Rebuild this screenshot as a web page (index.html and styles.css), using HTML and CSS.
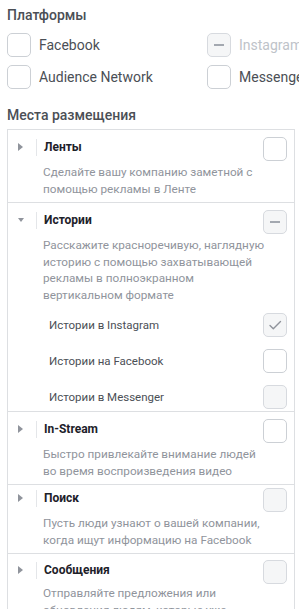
FILE: index.html
```html
<!DOCTYPE html>
<html lang="ru">
<head>
<meta charset="utf-8">
<link rel="stylesheet" href="styles.css">
</head>
<body>
<div class="page">
  <h2 class="heading">Платформы</h2>
  <div class="platforms">
    <label class="platform"><span class="cb"></span><span>Facebook</span></label>
    <label class="platform platform-disabled"><span class="cb cb-disabled cb-dash"></span><span>Instagram</span></label>
    <label class="platform"><span class="cb"></span><span>Audience Network</span></label>
    <label class="platform"><span class="cb"></span><span>Messenger</span></label>
  </div>

  <h2 class="heading heading-placements">Места размещения</h2>
  <div class="placements">
    <section class="placement">
      <div class="ph">
        <span class="arrow arrow-right"></span><span class="sep"></span>
        <span class="ptitle">Ленты</span>
        <span class="cb"></span>
      </div>
      <p class="desc">Сделайте вашу компанию заметной с помощью рекламы в Ленте</p>
    </section>

    <section class="placement">
      <div class="ph">
        <span class="arrow arrow-down"></span><span class="sep"></span>
        <span class="ptitle">Истории</span>
        <span class="cb cb-disabled cb-dash"></span>
      </div>
      <p class="desc">Расскажите красноречивую, наглядную историю с помощью захватывающей рекламы в полноэкранном вертикальном формате</p>
      <div class="subs">
        <div class="sub"><span class="subtitle">Истории в Instagram</span><span class="cb cb-disabled cb-check"><svg viewBox="0 0 24 24" width="24" height="24"><path d="M7 12.5l3.3 3.3L17.5 8.6" fill="none" stroke="#90949c" stroke-width="1.4" stroke-linecap="round" stroke-linejoin="round"/></svg></span></div>
        <div class="sub"><span class="subtitle">Истории на Facebook</span><span class="cb"></span></div>
        <div class="sub"><span class="subtitle">Истории в Messenger</span><span class="cb cb-disabled"></span></div>
      </div>
    </section>

    <section class="placement">
      <div class="ph">
        <span class="arrow arrow-right"></span><span class="sep"></span>
        <span class="ptitle">In-Stream</span>
        <span class="cb"></span>
      </div>
      <p class="desc">Быстро привлекайте внимание людей во время воспроизведения видео</p>
    </section>

    <section class="placement placement-tight">
      <div class="ph">
        <span class="arrow arrow-right"></span><span class="sep"></span>
        <span class="ptitle">Поиск</span>
        <span class="cb cb-disabled"></span>
      </div>
      <p class="desc">Пусть люди узнают о вашей компании, когда ищут информацию на Facebook</p>
    </section>

    <section class="placement placement-last">
      <div class="ph">
        <span class="arrow arrow-right"></span><span class="sep"></span>
        <span class="ptitle">Сообщения</span>
        <span class="cb cb-disabled"></span>
      </div>
      <p class="desc desc-close">Отправляйте предложения или обновления людям, которые уже общались с вашей компанией</p>
    </section>
  </div>
</div>
</body>
</html>
```

FILE: styles.css
```css
html, body {
  margin: 0;
  padding: 0;
  background: #ffffff;
  overflow: hidden;
}

body {
  font-family: Roboto, "Noto Sans", Arial, sans-serif;
  color: #4b4f56;
}

.page {
  padding: 6px 0 0 7px;
  width: 400px;
}

.heading {
  margin: 0;
  font-size: 14px;
  line-height: 18px;
  font-weight: 500;
  color: #4b4f56;
}

.heading-placements {
  margin-top: 17px;
}

.platforms {
  margin-top: 9px;
  display: grid;
  grid-template-columns: 200px 200px;
  row-gap: 8px;
}

.platform {
  display: flex;
  align-items: center;
  gap: 8px;
  font-size: 14px;
  line-height: 16px;
  color: #4b4f56;
  white-space: nowrap;
}

.platform-disabled {
  color: #bec3c9;
}

.cb {
  position: relative;
  flex: 0 0 auto;
  box-sizing: border-box;
  width: 24px;
  height: 24px;
  border: 1px solid #ccd0d5;
  border-radius: 5px;
  background: #ffffff;
  display: block;
}

.cb-disabled {
  background: #f5f6f7;
  border-color: #d7dadf;
}

.cb-dash::after {
  content: "";
  position: absolute;
  left: 6px;
  top: 10px;
  width: 10px;
  height: 2px;
  background: #a3a8b0;
}

.cb-check svg {
  position: absolute;
  left: -1px;
  top: -1px;
}

.placements {
  margin-top: 5px;
  width: 288px;
  box-sizing: border-box;
  border: 1px solid #dddfe2;
  border-bottom: none;
}

.placement {
  padding: 7px 7px 0 10px;
  border-bottom: 1px solid #dddfe2;
}

.placement-tight {
  padding-top: 3px;
}

.placement-last {
  padding-top: 6px;
}

.ph {
  display: flex;
  align-items: center;
  min-height: 24px;
}

.arrow {
  width: 0;
  height: 0;
  flex: 0 0 auto;
  margin-bottom: 4px;
}

.arrow-right {
  margin-right: 13px;
  border-top: 4.5px solid transparent;
  border-bottom: 4.5px solid transparent;
  border-left: 5px solid #90949c;
}

.arrow-down {
  margin-right: 12px;
  border-left: 3.5px solid transparent;
  border-right: 3.5px solid transparent;
  border-top: 4px solid #90949c;
}

.sep {
  width: 1px;
  height: 17px;
  background: #e4e6e9;
  margin-right: 7px;
  margin-bottom: 4px;
}

.ptitle {
  flex: 1;
  font-size: 12px;
  line-height: 18px;
  font-weight: 700;
  color: #1d2129;
  margin-bottom: 4px;
}

.desc {
  margin: 3px 21px 5px 25px;
  font-size: 11.75px;
  line-height: 16.5px;
  color: #90949c;
}

.desc-close {
  margin-top: 1px;
}

.subs {
  margin: 10px 0 2px 31px;
  display: flex;
  flex-direction: column;
  gap: 12px;
}

.sub {
  display: flex;
  align-items: center;
  justify-content: space-between;
}

.subtitle {
  font-size: 11.5px;
  line-height: 16px;
  color: #4b4f56;
}
```
